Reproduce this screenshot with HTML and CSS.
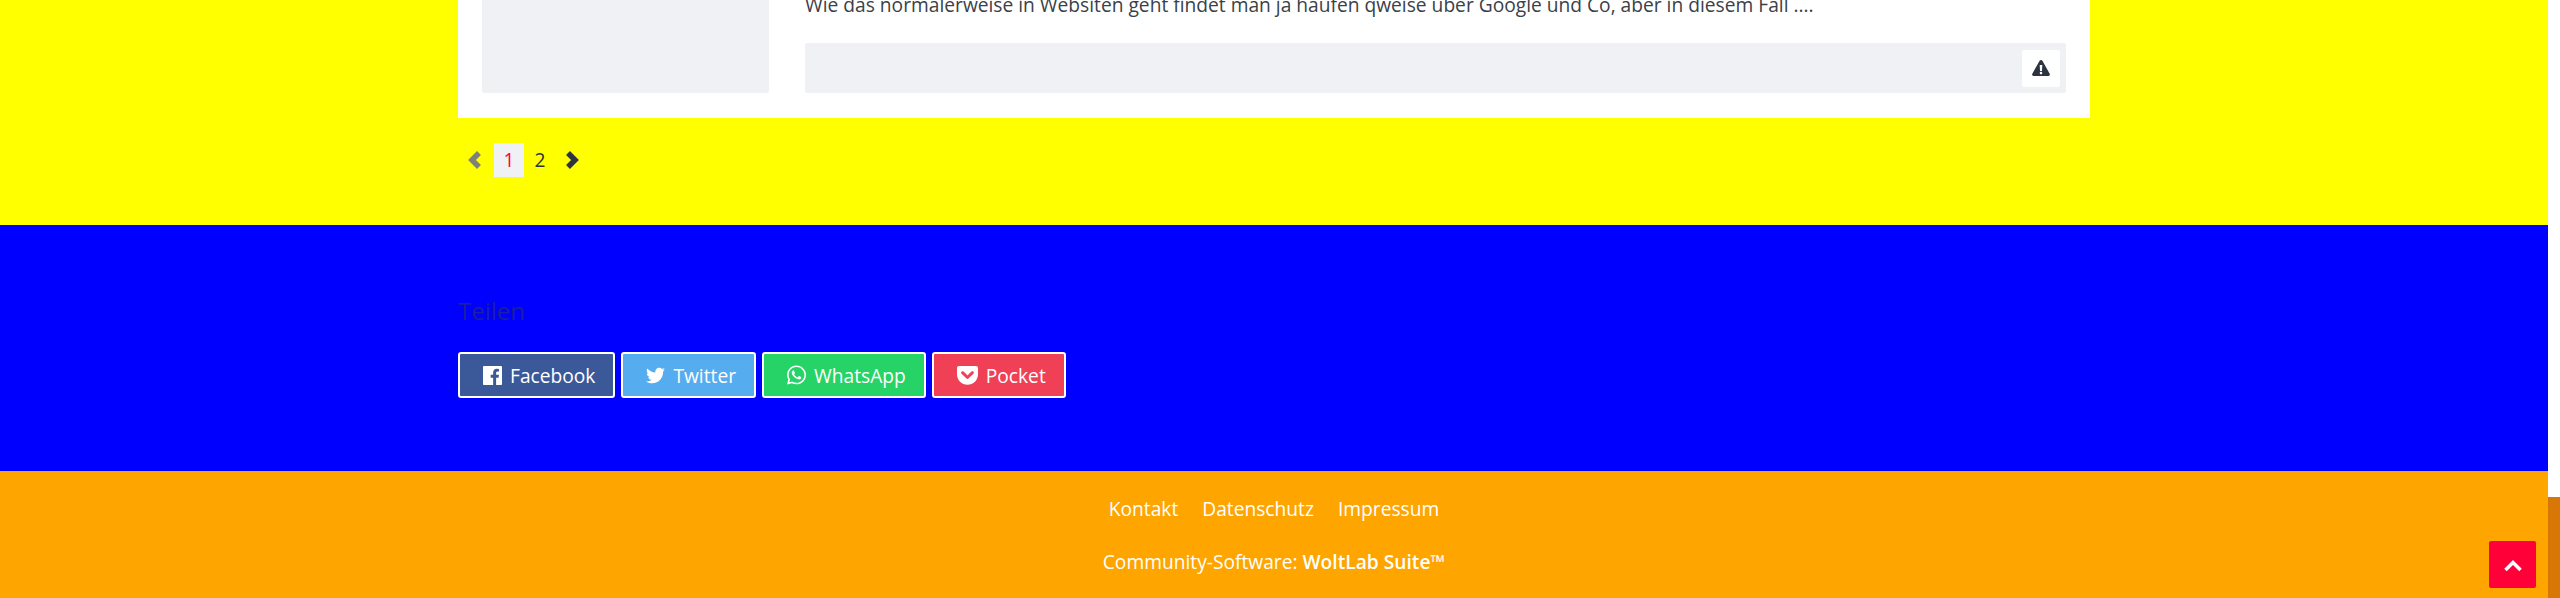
FILE: index.html
```html
<!DOCTYPE html>
<html lang="de">
  <head>
    <meta charset="UTF-8" />
    <title>Teilen</title>
    <link rel="stylesheet" href="styles.css">
  </head>
  <body>
    <div class="page">
      <div class="content">
        <div class="wrap">
          <div class="card">
            <div class="thumb"></div>
            <div class="cardBody">
              <p class="teaser">Wie das normalerweise in Websiten geht findet man ja haufen qweise über Google und Co, aber in diesem Fall ....</p>
              <div class="cardFooter">
                <a class="reportButton" href="#">
                  <svg viewBox="0 0 18 16" width="18" height="16"><path fill="#2c3440" fill-rule="evenodd" d="M9 0c.6 0 1.100.3 1.400.8l7.300 13c.6 1-.1 2.200-1.300 2.200H1.600C.4 16-.3 14.800.3 13.800L7.600.8C7.900.3 8.400 0 9 0zM7.700 5l.3 6h2l.3-6H7.700zM9 11.800a1.300 1.300 0 1 0 0 2.600 1.300 1.300 0 0 0 0-2.600z"/></svg>
                </a>
              </div>
            </div>
          </div>
          <nav class="pagination">
            <a class="pageArrow disabled" href="#"><svg viewBox="0 0 17 20" width="17" height="20"><polyline points="13,3 6,10 13,17" /></svg></a>
            <a class="pageNum active" href="#">1</a>
            <a class="pageNum" href="#">2</a>
            <a class="pageArrow" href="#"><svg viewBox="0 0 17 20" width="17" height="20"><polyline points="4,3 11,10 4,17" /></svg></a>
          </nav>
        </div>

        <section class="shareBox">
          <div class="wrap">
            <h2 class="shareTitle">Teilen</h2>
            <div class="shareButtons">
              <a class="shareBtn facebook" href="#">
                <svg viewBox="128 128 1536 1536" width="19" height="19"><path d="M1579 128q35 0 60 25t25 60v1366q0 35-25 60t-60 25h-391v-595h199l30-232h-229v-148q0-56 23.500-84t91.500-28l122-1v-207q-63-9-178-9-136 0-217.500 80t-81.500 226v171h-200v232h200v595h-735q-35 0-60-25t-25-60v-1366q0-35 25-60t60-25h1366z"/></svg>
                Facebook
              </a>
              <a class="shareBtn twitter" href="#">
                <svg viewBox="0 0 512 512" width="19" height="19"><path d="M459.370 151.716c.325 4.548.325 9.097.325 13.645 0 138.720-105.583 298.558-298.558 298.558-59.452 0-114.680-17.219-161.137-47.106 8.447.974 16.568 1.299 25.340 1.299 49.055 0 94.213-16.568 130.274-44.832-46.132-.975-84.792-31.188-98.112-72.772 6.498.974 12.995 1.624 19.818 1.624 9.421 0 18.843-1.300 27.614-3.573-48.081-9.747-84.143-51.980-84.143-102.985v-1.299c13.969 7.797 30.214 12.670 47.431 13.319-28.264-18.843-46.781-51.005-46.781-87.391 0-19.492 5.197-37.360 14.294-52.954 51.655 63.675 129.300 105.258 216.365 109.807-1.624-7.797-2.599-15.918-2.599-24.040 0-57.828 46.782-104.934 104.934-104.934 30.213 0 57.502 12.670 76.670 33.137 23.715-4.548 46.456-13.320 66.599-25.340-7.798 24.366-24.366 44.833-46.132 57.827 21.117-2.273 41.584-8.122 60.426-16.243-14.292 20.791-32.161 39.308-52.628 54.253z"/></svg>
                Twitter
              </a>
              <a class="shareBtn whatsapp" href="#">
                <svg viewBox="0 0 448 512" width="19" height="22"><path d="M380.900 97.100C339 55.100 283.200 32 223.900 32c-122.400 0-222 99.600-222 222 0 39.100 10.200 77.300 29.600 111L0 480l117.700-30.900c32.400 17.700 68.900 27 106.100 27h.1c122.300 0 224.100-99.600 224.100-222 0-59.300-25.200-115-67.100-157zm-157 341.600c-33.200 0-65.700-8.900-94-25.700l-6.700-4-69.800 18.300L72 359.200l-4.400-7c-18.500-29.400-28.200-63.300-28.200-98.200 0-101.700 82.800-184.500 184.600-184.500 49.300 0 95.600 19.200 130.400 54.100 34.800 34.900 56.200 81.200 56.100 130.500 0 101.800-84.900 184.600-186.600 184.600zm101.200-138.200c-5.500-2.800-32.800-16.200-37.900-18-5.100-1.900-8.800-2.800-12.500 2.800-3.700 5.600-14.300 18-17.600 21.800-3.200 3.700-6.500 4.200-12 1.400-32.600-16.300-54-29.100-75.500-66-5.700-9.800 5.700-9.100 16.300-30.300 1.800-3.700.9-6.900-.5-9.700-1.400-2.800-12.500-30.100-17.100-41.200-4.500-10.800-9.100-9.300-12.500-9.500-3.200-.2-6.900-.2-10.600-.2-3.700 0-9.700 1.400-14.800 6.900-5.100 5.600-19.400 19-19.400 46.300 0 27.300 19.900 53.700 22.600 57.400 2.800 3.700 39.100 59.700 94.800 83.800 35.200 15.200 49 16.500 66.600 13.900 10.700-1.600 32.800-13.400 37.400-26.400 4.600-13 4.600-24.100 3.200-26.400-1.300-2.500-5-3.900-10.500-6.600z"/></svg>
                WhatsApp
              </a>
              <a class="shareBtn pocket" href="#">
                <svg viewBox="0 0 448 512" width="21" height="24"><path d="M407.600 64h-367C18.500 64 0 82.500 0 104.600v135.200C0 364.500 99.700 464 224.200 464c124 0 223.800-99.500 223.800-224.200V104.600c0-22.400-17.700-40.600-40.400-40.600zm-162 268.500c-12.400 11.800-31.400 11.100-42.400 0C89.500 223.600 88.300 227.400 88.300 209.300c0-16.900 13.800-30.700 30.700-30.700 17 0 16.100 3.800 105.200 89.300 90.600-86.900 88.600-89.300 105.500-89.300 16.900 0 30.700 13.800 30.700 30.700 0 17.800-2.900 15.700-114.800 123.200z"/></svg>
                Pocket
              </a>
            </div>
          </div>
        </section>

        <footer class="footer">
          <nav class="footerNav">
            <a href="#">Kontakt</a>
            <a href="#">Datenschutz</a>
            <a href="#">Impressum</a>
          </nav>
          <p class="copyright">Community-Software: <b>WoltLab Suite™</b></p>
        </footer>
      </div>

      <div class="scrollTrack"><div class="scrollThumb"></div></div>

      <a class="toTop" href="#">
        <svg viewBox="0 0 24 16" width="24" height="16"><polyline points="4.500,13 12,5.500 19.500,13" /></svg>
      </a>
    </div>
  </body>
</html>
```

FILE: styles.css
```css
html, body {
  margin: 0;
  height: 100%;
  overflow: hidden;
}

body {
  font-family: "Open Sans", sans-serif;
  font-size: 19.2px;
  color: #3a4149;
}

a {
  text-decoration: none;
  color: inherit;
}

.page {
  position: relative;
  display: flex;
  height: 598px;
}

/* the page is scrolled to its end, so everything hangs from the bottom */
.content {
  flex: 1;
  display: flex;
  flex-direction: column;
  justify-content: flex-end;
  overflow: hidden;
  background: #ffff00;
}

.content > * {
  flex-shrink: 0;
}

.wrap {
  width: 1632px;
  margin: 0 auto;
  box-sizing: border-box;
}

.card {
  display: flex;
  gap: 36px;
  padding: 0 24px 25px 24px;
  background: #fff;
}

.thumb {
  flex: 0 0 287px;
  background: #eff1f5;
  border-radius: 2px;
}

.cardBody {
  flex: 1;
}

.teaser {
  margin: 0 0 23px;
  line-height: 30px;
}

.cardFooter {
  display: flex;
  justify-content: flex-end;
  align-items: center;
  height: 50px;
  padding-right: 6px;
  background: #eff1f5;
  border-radius: 2px;
}

.reportButton {
  display: flex;
  align-items: center;
  justify-content: center;
  width: 38px;
  height: 37px;
  background: #fff;
  border-radius: 2px;
}

.pagination {
  display: flex;
  align-items: center;
  height: 34px;
  margin: 25px 0 48px;
  padding-left: 8px;
  color: #2c3440;
}

.pageArrow {
  display: flex;
}

.pageArrow polyline {
  fill: none;
  stroke: #2c3440;
  stroke-width: 5.500;
}

.pageArrow.disabled polyline {
  stroke: #7f8078;
}

.pageNum {
  width: 30px;
  line-height: 34px;
  text-align: center;
}

.pageNum.active {
  margin: 0 1px 0 11px;
  background: #eff1f5;
  color: #ff0039;
}

.pageNum + .pageArrow {
  margin-left: 9px;
}

.shareBox {
  height: 246px;
  box-sizing: border-box;
  padding-top: 70px;
  background: #0000ff;
}

.shareTitle {
  margin: 0 0 25px;
  font-size: 24px;
  font-weight: 400;
  line-height: 32px;
  color: #1b1fa0;
}

.shareButtons {
  display: flex;
  gap: 6px;
}

.shareBtn {
  display: flex;
  align-items: center;
  gap: 8px;
  box-sizing: border-box;
  height: 46px;
  padding: 0 18px 0 23px;
  border: 2px solid #fff;
  border-radius: 3px;
  color: #fff;
}

.shareBtn svg {
  fill: #fff;
}

.facebook { background: #3b5998; }
.twitter { background: #55acee; }
.whatsapp { background: #25d366; }
.pocket { background: #ef4056; }

.footer {
  height: 127px;
  box-sizing: border-box;
  padding-top: 24px;
  background: #ffa500;
  color: #fff;
  text-align: center;
}

.footerNav {
  display: flex;
  justify-content: center;
  gap: 24px;
  line-height: 28px;
}

.copyright {
  margin: 25px 0 0;
  line-height: 28px;
}

.copyright b {
  font-weight: 600;
}

.scrollTrack {
  flex: 0 0 12px;
  display: flex;
  flex-direction: column;
  justify-content: flex-end;
  background: #fff;
}

.scrollThumb {
  height: 101px;
  background: #d97706;
}

.toTop {
  position: absolute;
  left: 2489px;
  top: 541px;
  display: flex;
  align-items: center;
  justify-content: center;
  width: 47px;
  height: 47px;
  background: #ff0039;
  border-radius: 2px;
}

.toTop polyline {
  fill: none;
  stroke: #fff;
  stroke-width: 3.500;
}
```
